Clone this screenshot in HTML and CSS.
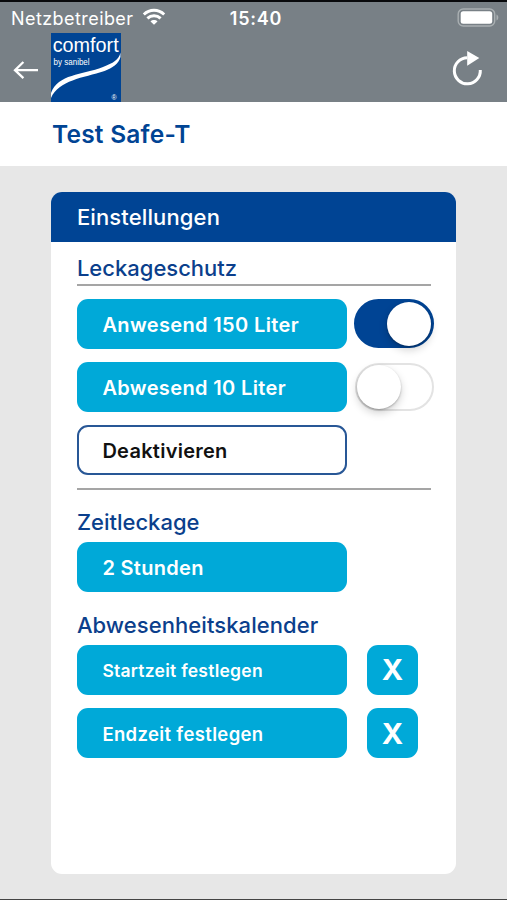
FILE: index.html
```
<!DOCTYPE html>
<html lang="de">
<head>
<meta charset="utf-8">
<title>Test Safe-T</title>
<link rel="stylesheet" href="styles.css">
</head>
<body>
<div class="app">
  <header class="top">
    <div class="status">
      <div class="carrier"><span class="carrier-name">Netzbetreiber</span>
        <svg class="wifi" width="24" height="18" viewBox="0 0 24 18" fill="none" stroke="#fff" stroke-width="2.9"><path d="M1.8 6.5C7.6.9 16.4.9 22.2 6.5"/><path d="M5.4 10.4c3.7-3.5 9.5-3.5 13.2 0"/><path d="M12 16.8l-3.5-3.4c1.9-1.8 5.1-1.8 7 0z" fill="#fff" stroke="none"/></svg>
      </div>
      <time class="clock">15:40</time>
      <svg class="battery" width="42" height="20" viewBox="0 0 42 20"><rect x="1.2" y="1" width="36.5" height="17" rx="5" fill="none" stroke="#a9afb2" stroke-width="1.4"/><rect x="3.7" y="3.3" width="31.5" height="12.4" rx="2.5" fill="#fff"/><path d="M39.5 6.6c2.4.8 2.4 5.2 0 6z" fill="#a9afb2"/></svg>
    </div>
    <nav class="nav">
      <svg class="back" width="26" height="20" viewBox="0 0 26 20" fill="none" stroke="#fff" stroke-width="2.3"><path d="M25 10.2H2M10.4 2L2 10.2l8.4 8"/></svg>
      <svg class="logo" width="70" height="69" viewBox="0 0 70 69"><rect width="70" height="69" fill="#004494"/><text x="1.7" y="19" font-size="20.2" textLength="66" lengthAdjust="spacingAndGlyphs">comfort</text><text x="2.6" y="32" font-size="9.3" textLength="36" lengthAdjust="spacingAndGlyphs">by sanibel</text><path d="M0 65V60C7 41 31 42 52 34C62 30 68 27 69.500 19.500V24c-2 7-8 11-16 14C32 45 8 47 0 65z" fill="#fff"/><text x="60.500" y="66.5" font-size="7">®</text></svg>
      <svg class="reload" width="34" height="38" viewBox="0 0 34 38"><path d="M17.2 7.8A13 13 0 1 0 30.3 20" fill="none" stroke="#fff" stroke-width="3"/><path d="M17.2 1L29.3 8.1 17.2 15.7z" fill="#fff"/></svg>
    </nav>
  </header>
  <h1 class="title"><span>Test Safe-T</span></h1>
  <main class="content">
    <section class="card">
      <h2 class="card-head"><span>Einstellungen</span></h2>
      <div class="card-body">
        <h3 class="label leak">Leckageschutz</h3>
        <hr class="rule">
        <div class="rows">
          <div class="row"><button class="btn present">Anwesend 150 Liter</button><span class="toggle on"><i class="knob"></i></span></div>
          <div class="row"><button class="btn absent">Abwesend 10 Liter</button><span class="toggle"><i class="knob"></i></span></div>
          <div class="row"><button class="btn outline">Deaktivieren</button></div>
        </div>
        <hr class="rule">
        <h3 class="label time">Zeitleckage</h3>
        <button class="btn hours">2 Stunden</button>
        <h3 class="label calendar">Abwesenheitskalender</h3>
        <div class="row"><button class="btn small start">Startzeit festlegen</button><button class="btn clear">X</button></div>
        <div class="row last"><button class="btn small end">Endzeit festlegen</button><button class="btn clear">X</button></div>
      </div>
    </section>
  </main>
</div>
</body>
</html>
```
FILE: styles.css
```
* { box-sizing: border-box; }
body { margin: 0; font-family: Inter, "Liberation Sans", sans-serif; }
svg { display: block; flex: none; }
h1, h2, h3, hr { margin: 0; }
.app { height: 900px; display: flex; flex-direction: column; background: #e7e7e7; border-top: 2px solid #08090c; border-bottom: 1px solid #444; overflow: hidden; }
.top { height: 100.4px; flex: none; background: #788086; color: #fff; }
.status { height: 31px; display: grid; grid-template-columns: 1fr auto 1fr; align-items: center; padding: 1px 8px 0 11px; }
.carrier { display: flex; align-items: center; gap: 9px; }
.carrier-name { font-size: 18px; letter-spacing: .43px; }
.wifi { margin-top: -2px; margin-left: -1px; }
.clock { font-size: 18px; font-weight: 600; letter-spacing: .8px; margin-left: 2px; }
.battery { justify-self: end; margin-top: -1px; }
.nav { height: 69px; display: flex; align-items: center; padding: 0 23px 0 13px; }
.back { margin-top: 5px; }
.logo { margin: 0 0 0 11.5px; }
.logo text { fill: #fff; font-family: "Liberation Sans", sans-serif; }
.reload { margin-left: auto; margin-top: 2px; }
.title { height: 63.7px; flex: none; display: flex; align-items: center; padding: 0 0 0 52px; background: #fff; color: #004494; font-size: 24.5px; font-weight: 600; letter-spacing: .22px; }
.content { padding: 25.5px 50px 0 51.4px; }
.card { height: 682.4px; width: 405px; border-radius: 11px; background: #fff; overflow: hidden; }
.card-head { height: 50px; padding-left: 25.5px; display: flex; align-items: center; background: #004494; color: #fff; font-size: 22px; font-weight: 500; letter-spacing: .13px; }
.card-body { padding: 10px 25px 0 25.5px; }
.label { height: 32.5px; line-height: 32px; color: #0b3f8c; font-size: 22px; font-weight: 500; white-space: nowrap; }
.rule { height: 2px; border: 0; background: #a5a5a5; }
.rows { display: flex; flex-direction: column; gap: 13px; padding: 12.5px 0 12.6px; }
.row { display: flex; align-items: center; }
.btn { width: 270px; height: 50.3px; flex: none; display: flex; align-items: center; border: 0; border-radius: 11px; padding: 1px 0 0 25.5px; background: #00a9d8; color: #fff; font: 600 20px Inter, "Liberation Sans", sans-serif; }
.present, .absent { padding-top: 2px; letter-spacing: .36px; }
.hours { letter-spacing: .3px; }
.outline { background: #fff; color: #111; border: 2px solid #285796; padding-left: 23.5px; letter-spacing: .27px; }
.start { padding-top: 2px; font-size: 17.5px; letter-spacing: .25px; }
.end { font-size: 18.5px; letter-spacing: .35px; }
.clear { width: 51px; margin-left: 20px; padding: 0; justify-content: center; font-size: 29px; font-weight: 700; }
.toggle { flex: none; width: 79px; height: 48.5px; margin-left: 8px; border: 2px solid #e3e3e3; border-radius: 25px; display: flex; align-items: center; }
.toggle.on { width: 80.5px; margin-left: 7px; height: 49.5px; background: #004494; border-color: #004494; justify-content: flex-end; padding-right: 1px; }
.knob { width: 44px; height: 44px; border-radius: 50%; background: #fff; box-shadow: 0 4px 8px rgba(0,0,0,.18), 0 1px 2px rgba(0,0,0,.25); }
.time { margin-top: 15px; height: 37px; line-height: 35px; }
.calendar { margin-top: 16px; height: 36.4px; line-height: 34px; letter-spacing: .07px; }
.last { margin-top: 13px; }
```
